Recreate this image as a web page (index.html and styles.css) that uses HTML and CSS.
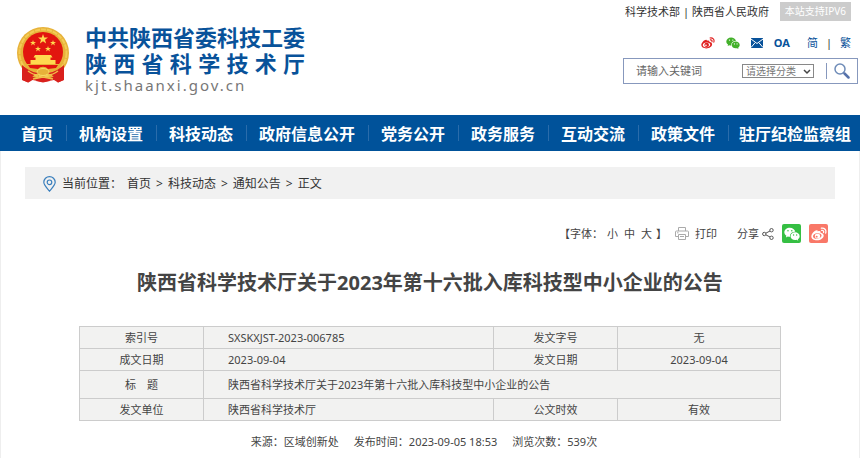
FILE: index.html
```html
<!DOCTYPE html>
<html lang="zh-CN">
<head>
<meta charset="utf-8">
<meta name="viewport" content="width=device-width, initial-scale=1">
<title>陕西省科学技术厅</title>
<link rel="stylesheet" href="styles.css">
</head>
<body>
<svg class="sprite" aria-hidden="true">
  <symbol id="weibo" viewBox="0 0 24 24">
    <path fill="currentColor" fill-rule="evenodd" d="M10 8.2c1.600-.7 4-.9 4.400.4.300.9-.2 1.900-.2 1.900s4.300-.1 4.800 3.200c.5 3.900-4.600 7.600-10 7.600C4 21.300.5 18.900.5 15.600c0-4.300 5.700-9.900 8.600-9.300 1.200.3 1.100 1.200.9 1.900zM9.500 11c-3.800.1-6.700 2.200-6.500 4.700.200 2.300 3.100 3.800 6.700 3.500 3.600-.3 6.400-2.500 6.200-4.800-.2-2.200-2.800-3.500-6.400-3.400z"/>
    <path fill="currentColor" fill-rule="evenodd" d="M9.700 11.700a4 3.600 0 1 0 .1 7.200 4 3.600 0 0 0-.1-7.200zM8.500 14.700a1.500 1.300 0 1 1 0 2.600 1.500 1.300 0 0 1 0-2.600z"/>
    <path class="weibo-waves" fill="none" stroke-width="1.900" stroke-linecap="round" d="M15.500 3.300c4.600-.9 8 2.600 6.500 7.300M16 6.700c2.200-.4 3.500 1.100 2.800 3.100"/>
  </symbol>
  <symbol id="wechat" viewBox="0 0 24 24">
    <path fill="currentColor" fill-rule="evenodd" d="M8.800 2.500C4.200 2.500.5 5.600.5 9.400c0 2.100 1.200 4 3.100 5.300L2.800 17.200l3-1.500c1 .3 2 .5 3.300.5C8.300 11.700 12 8.400 17 8.500 16.300 5 12.900 2.500 8.800 2.500zM6 5.900a1.150 1.150 0 1 1 0 2.300 1.150 1.150 0 0 1 0-2.300zM11.700 5.900a1.150 1.150 0 1 1 0 2.300 1.150 1.150 0 0 1 0-2.300z"/>
    <path fill="currentColor" fill-rule="evenodd" d="M16.700 9.500c-3.800 0-6.900 2.600-6.900 5.800s3.100 5.800 6.900 5.800c.8 0 1.600-.1 2.300-.3l2.400 1.300-.7-2.100c1.700-1.100 2.800-2.700 2.800-4.700 0-3.200-3.100-5.800-6.800-5.800zM14.400 12.500a1 1 0 1 1 0 2 1 1 0 0 1 0-2zM19 12.500a1 1 0 1 1 0 2 1 1 0 0 1 0-2z"/>
  </symbol>
</svg>

<header class="header">
  <a class="brand" href="#">
    <svg class="emblem" viewBox="0 0 54 58" aria-hidden="true">
      <path fill="#d9201c" d="M8 38 6.500 54l6 2.500 4-2.500 10.500 2 11-2 4 2.500 5.500-2.500L46 38z"/>
      <circle cx="27" cy="27" r="26" fill="#e7b23a"/>
      <circle cx="27" cy="27" r="23.500" fill="none" stroke="#f3cb55" stroke-width="2" stroke-dasharray="5 1"/>
      <circle cx="27" cy="26" r="20" fill="#e2150f"/>
      <g fill="#ffd94f">
        <path d="M27 8l1.200 3.600H32l-3 2.200 1.100 3.600-3.100-2.200-3.100 2.200 1.100-3.600-3-2.200h3.800z"/>
        <path id="star" d="M17 14l.7 2H20l-1.800 1.300.7 2.100L17 18.100l-1.900 1.300.7-2.100L14 16h2.300z"/>
        <use href="#star" x="20"/>
        <use href="#star" x="5" y="6"/>
        <use href="#star" x="15" y="6"/>
        <path d="M19 29h16l1.500 2.500h-2V34h5v4H14.500v-4h5v-2.500h-2z"/>
      </g>
      <path fill="#e9b137" d="M10 38h34l-4 7-6 3-7 1-7-1-6-3z"/>
      <path fill="#e2150f" d="M12 39h30l-2 3-8 1a6 5 0 0 0-10 0l-8-1z"/>
      <ellipse cx="27" cy="46" rx="6" ry="3.500" fill="#e7b23a" stroke="#f9dc66"/>
      <path fill="#d9201c" d="M6 39c5 4 9 7 16 8l-5 3-5 6.500-6-2.500zM48 39c-5 4-9 7-16 8l5 3 5 6.500 6-2.500zM22 52l5-1.500 5 1.500 2 3-7 1.500-7-1.500z"/>
      <path fill="none" stroke="#f0c04a" stroke-width="1.500" d="M12 45c4 3 6 4 10 4M42 45c-4 3-6 4-10 4M17 53l10-2 10 2"/>
    </svg>
    <span class="brand-text">
      <span class="brand-line">中共陕西省委科技工委</span>
      <span class="brand-line brand-spread">陕 西 省 科 学 技 术 厅</span>
      <span class="brand-url">kjt.shaanxi.gov.cn</span>
    </span>
  </a>
  <div class="tools">
    <div class="top-links">
      <a href="#">科学技术部</a><span class="bar">|</span><a href="#">陕西省人民政府</a>
      <span class="ipv6">本站支持IPV6</span>
    </div>
    <div class="quick">
      <a class="weibo" href="#" aria-label="微博"><svg class="icon"><use href="#weibo"/></svg></a>
      <a class="wechat" href="#" aria-label="微信"><svg class="icon"><use href="#wechat"/></svg></a>
      <a href="#" aria-label="邮箱"><svg class="mail" viewBox="0 0 12 10"><path fill="#08529a" d="M0 0h12v10H0z"/><path fill="none" stroke="#fff" d="M0 1l6 4.500L12 1M0 9.500l4-4.700M12 9.500L8 4.800"/></svg></a>
      <a class="oa" href="#">OA</a>
      <span class="lang"><a href="#">简</a><span>|</span><a href="#">繁</a></span>
    </div>
    <form class="search">
      <input class="search-text" type="text" placeholder="请输入关键词" aria-label="关键词">
      <span class="select-wrap">
        <select class="category" aria-label="分类"><option>请选择分类</option></select>
        <svg class="chevron" viewBox="0 0 8 6" aria-hidden="true"><path fill="none" stroke="#444" stroke-width="1.500" d="M1 1l3 3 3-3"/></svg>
      </span>
      <button class="search-button" type="submit" aria-label="搜索"><svg class="glass" viewBox="0 0 16 16"><circle cx="6" cy="6" r="5" fill="none" stroke="#6f8cb8" stroke-width="1.500"/><path stroke="#5672aa" stroke-width="2.500" stroke-linecap="round" d="M10.500 10.500l4 4"/></svg></button>
    </form>
  </div>
</header>

<nav class="nav">
  <a href="#">首页</a>
  <a href="#">机构设置</a>
  <a href="#">科技动态</a>
  <a href="#">政府信息公开</a>
  <a href="#">党务公开</a>
  <a href="#">政务服务</a>
  <a href="#">互动交流</a>
  <a href="#">政策文件</a>
  <a href="#">驻厅纪检监察组</a>
</nav>

<main class="page">
  <div class="crumbs">
    <svg class="pin" viewBox="0 0 13 16" aria-hidden="true"><g fill="none" stroke="#3a7fbd" stroke-width="1.200"><path d="M6.500 15.200C3.500 11.500.8 9 .8 6.300a5.700 5.700 0 0 1 11.400 0c0 2.700-2.700 5.200-5.700 8.900z"/><circle cx="6.500" cy="6.300" r="2.300"/></g></svg>
    <span class="crumb-label">当前位置<span class="colon">：</span></span>
    <a href="#">首页</a><span>&gt;</span><a href="#">科技动态</a><span>&gt;</span><a href="#">通知公告</a><span>&gt;</span><span>正文</span>
  </div>

  <div class="actions">
    <div class="font-size"><span>【字体<span class="colon">：</span></span><span class="sizes"><button type="button">小</button><button type="button">中</button><button type="button">大</button></span><span>】</span></div>
    <button class="print" type="button">
      <svg class="printer" viewBox="0 0 14 13" aria-hidden="true"><g fill="none" stroke="#aaa"><path d="M3.500 4V.5h7V4M3.500 9.500h-3V5q0-1 1-1h11q1 0 1 1v4.500h-3"/><path d="M3.500 7.500h7v5h-7zM5 9.500h4M2 5.800h1.500"/></g></svg>打印
    </button>
    <div class="share">
      <span>分享</span>
      <svg class="share-icon" viewBox="0 0 12 12" aria-hidden="true"><g fill="none" stroke="#555"><circle cx="2.300" cy="6" r="1.700"/><circle cx="9.500" cy="2.200" r="1.700"/><circle cx="9.500" cy="9.800" r="1.700"/><path d="M3.800 5.200L8 3M3.800 6.800L8 9"/></g></svg>
      <a class="badge badge-wechat" href="#" aria-label="分享到微信"><svg class="icon"><use href="#wechat"/></svg></a>
      <a class="badge badge-weibo" href="#" aria-label="分享到微博"><svg class="icon"><use href="#weibo"/></svg></a>
    </div>
  </div>

  <h1 class="title">陕西省科学技术厅关于2023年第十六批入库科技型中小企业的公告</h1>

  <table class="info">
    <colgroup><col class="col-label"><col><col class="col-label"><col class="col-side"></colgroup>
    <tbody>
      <tr><th scope="row">索引号</th><td>SXSKXJST-2023-006785</td><th scope="row">发文字号</th><td class="center">无</td></tr>
      <tr><th scope="row">成文日期</th><td>2023-09-04</td><th scope="row">发文日期</th><td class="center">2023-09-04</td></tr>
      <tr class="tall"><th scope="row">标&emsp;题</th><td colspan="3">陕西省科学技术厅关于2023年第十六批入库科技型中小企业的公告</td></tr>
      <tr><th scope="row">发文单位</th><td>陕西省科学技术厅</td><th scope="row">公文时效</th><td class="center">有效</td></tr>
    </tbody>
  </table>

  <p class="source"><span>来源<span class="colon">：</span>区域创新处</span><span>发布时间<span class="colon">：</span>2023-09-05 18:53</span><span>浏览次数<span class="colon">：</span>539次</span></p>
</main>
</body>
</html>
```
FILE: styles.css
```css
* { box-sizing: border-box; }

body {
  margin: 0;
  background: #fff;
  color: #444;
  font: 11px/16px "Noto Sans", "Noto Sans CJK SC", sans-serif;
}

a { color: inherit; text-decoration: none; }
svg { display: block; }
button { padding: 0; border: 0; background: none; color: inherit; font: inherit; cursor: pointer; }

.sprite { position: absolute; width: 0; height: 0; }
.icon { width: 14px; height: 14px; }
.weibo-waves { stroke: currentColor; }

/* Colon centred in its em box */
.colon { font-family: "Noto Sans CJK TC", sans-serif; line-height: 1; }

/* Header */
.header {
  display: flex;
  justify-content: space-between;
  padding: 2px 2px 0 16px;
  min-height: 115px;
}

.brand { display: flex; align-items: flex-start; gap: 15px; padding-top: 21px; }
.emblem { width: 54px; height: 58px; margin-top: 3px; }
.brand-text { display: flex; flex-direction: column; }
.brand-line {
  color: #08529a;
  font-family: "Noto Sans CJK SC", sans-serif;
  font-size: 22px;
  font-weight: 700;
  line-height: 26px;
}
.brand-spread { text-align: justify; text-align-last: justify; }
.brand-url { color: #777; font-size: 15px; line-height: 20px; letter-spacing: 2px; }

.tools { width: 235px; }
.top-links {
  display: flex;
  align-items: center;
  gap: 3px;
  margin-left: 2px;
  color: #333;
  line-height: 19px;
  white-space: nowrap;
}
.ipv6 {
  margin: 0 7px 0 auto;
  padding: 0 5px;
  background: #ccc;
  color: #fff;
  font-size: 10px;
}

.quick {
  display: flex;
  align-items: center;
  justify-content: flex-end;
  gap: 11px;
  padding: 14px 7px 0 0;
  color: #08529a;
}
.weibo { color: #e02020; }
.weibo .weibo-waves { stroke: #f5a623; }
.wechat { color: #43b02a; }
.mail { width: 12px; height: 10px; }
.oa { font-weight: 700; }
.lang { display: flex; gap: 8px; margin-left: 6px; }
.lang span { color: #333; }

.search {
  display: flex;
  align-items: center;
  height: 26px;
  margin-top: 7px;
  padding-left: 12px;
  border: 1px solid #8798bd;
}
.search-text {
  flex: 1;
  min-width: 0;
  padding: 0;
  border: 0;
  outline: 0;
  background: none;
  color: #555;
  font: inherit;
}
.search-text::placeholder { color: #666; opacity: 1; }
.select-wrap { position: relative; }
.category {
  display: block;
  width: 72px;
  height: 14px;
  padding: 0 3px;
  border: 1px solid #888;
  border-radius: 0;
  appearance: none;
  background: #fff;
  color: #777;
  font: 10px/12px "Noto Sans", "Noto Sans CJK SC", sans-serif;
}
.chevron { position: absolute; right: 3px; top: 5px; width: 8px; height: 6px; pointer-events: none; }
.search-button { margin-left: 12px; padding: 0 7px; border-left: 1px solid #8798bd; }
.glass { width: 16px; height: 16px; }

/* Main navigation */
.nav {
  display: flex;
  justify-content: center;
  align-items: center;
  height: 36px;
  background: #00529a;
  color: #fff;
  font-family: "Noto Sans CJK SC", sans-serif;
  font-size: 16px;
  font-weight: 700;
  white-space: nowrap;
}
.nav a { padding: 0 13px 0 12px; line-height: 16px; }
.nav a + a { border-left: 1px solid #2a6cab; }
.nav a:last-child { padding: 0 0 0 10px; }

/* Article */
.page { padding: 16px 24px 8px; border: solid #eee; border-width: 0 1px; }

.crumbs {
  display: flex;
  align-items: center;
  gap: 5px;
  min-height: 32px;
  padding: 1px 0 0 18px;
  background: #f1f1f1;
  color: #333;
  font-size: 12px;
}
.pin { width: 13px; height: 16px; margin-right: 1px; }

.actions {
  display: flex;
  align-items: center;
  justify-content: flex-end;
  margin: 25px 7px 0 0;
}
.font-size { display: flex; gap: 4px; }
.sizes { display: flex; gap: 6px; }
.print { display: flex; align-items: center; gap: 6px; margin: 0 20px 0 8px; }
.printer { width: 14px; height: 13px; }
.share { display: flex; align-items: center; gap: 3px; }
.share-icon { width: 12px; height: 12px; }
.badge {
  display: grid;
  place-items: center;
  width: 19px;
  height: 19px;
  margin-left: 5px;
  border-radius: 2px;
  color: #fff;
}
.badge .icon { width: 16px; height: 16px; }
.badge-wechat { background: #35bf43; }
.badge-weibo { background: #f97868; }

.title {
  margin: 24px 0 27px;
  color: #444;
  font-size: 20px;
  line-height: 32px;
  text-align: center;
}

.info {
  width: calc(100% - 108px);
  margin: 0 auto;
  border-collapse: collapse;
  table-layout: fixed;
  background: #f2f2f1;
}
.info th, .info td { height: 22px; padding: 0; border: 1px solid #ccc; font-weight: 400; }
.info td { padding-left: 24px; }
.info .center { padding: 0; text-align: center; }
.info .tall th, .info .tall td { height: 28px; }
.col-label { width: 124px; }
.col-side { width: 163px; }

.source { display: flex; justify-content: center; gap: 15px; margin: 13px 0 0; padding-right: 12px; }
```
